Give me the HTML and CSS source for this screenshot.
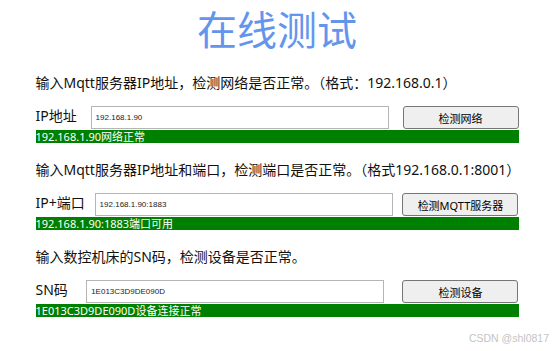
FILE: index.html
```html
<!DOCTYPE html>
<html lang="zh-CN">
<head>
    <meta charset="UTF-8">
    <title>在线测试</title>
    <link rel="stylesheet" href="styles.css">
</head>
<body>
<div class="wrap">
    <h1 class="title">在线测试</h1>

    <p class="tip">输入Mqtt服务器IP地址，检测网络是否正常。（格式：192.168.0.1）</p>
    <div class="row">
        <span class="label">IP地址</span>
        <input type="text" class="ipt" value="192.168.1.90">
        <button class="btn">检测网络</button>
    </div>
    <div class="result">192.168.1.90网络正常</div>

    <p class="tip">输入Mqtt服务器IP地址和端口，检测端口是否正常。（格式192.168.0.1:8001）</p>
    <div class="row">
        <span class="label">IP+端口</span>
        <input type="text" class="ipt" value="192.168.1.90:1883">
        <button class="btn">检测MQTT服务器</button>
    </div>
    <div class="result">192.168.1.90:1883端口可用</div>

    <p class="tip">输入数控机床的SN码，检测设备是否正常。</p>
    <div class="row">
        <span class="label">SN码</span>
        <input type="text" class="ipt" value="1E013C3D9DE090D">
        <button class="btn">检测设备</button>
    </div>
    <div class="result">1E013C3D9DE090D设备连接正常</div>
</div>
<div class="mark">CSDN @shl0817</div>
</body>
</html>
```

FILE: styles.css
```css
* {
    margin: 0;
    padding: 0;
    box-sizing: border-box;
}

body {
    font-family: "Noto Sans", "Noto Sans CJK SC", sans-serif;
    color: #111;
    background: #fff;
}

.wrap {
    width: 483px;
    margin: 0 auto;
}

.title {
    padding-top: 10px;
    font-size: 40px;
    line-height: 40px;
    font-weight: normal;
    color: #6495ed;
    text-align: center;
}

.tip {
    margin-top: 17px;
    font-size: 14px;
    line-height: 20px;
}

.title + .tip {
    margin-top: 23px;
}

.row {
    display: flex;
    justify-content: space-between;
    align-items: center;
    margin-top: 13px;
    height: 23px;
}

.label {
    display: block;
    font-size: 14px;
    line-height: 14px;
    margin-top: -3px;
}

.ipt {
    width: 298px;
    height: 23px;
    border: 1px solid #b5b5b5;
    padding-left: 4px;
    font-family: "Liberation Sans", sans-serif;
    font-size: 8px;
    color: #222;
    outline: none;
}

.btn {
    width: 116px;
    height: 23px;
    background-color: #efefef;
    border: 1px solid #767676;
    border-radius: 3px;
    font-family: "Noto Sans", "Noto Sans CJK SC", sans-serif;
    font-size: 11px;
    color: #000;
    cursor: pointer;
}

.result {
    margin-top: 1px;
    height: 13px;
    line-height: 13px;
    background-color: #008000;
    color: #fff;
    font-size: 11px;
    white-space: nowrap;
    overflow: hidden;
}

.mark {
    position: absolute;
    right: 5px;
    top: 332px;
    font-family: "Liberation Sans", sans-serif;
    font-size: 10.5px;
    color: #c4c4c4;
}
```
